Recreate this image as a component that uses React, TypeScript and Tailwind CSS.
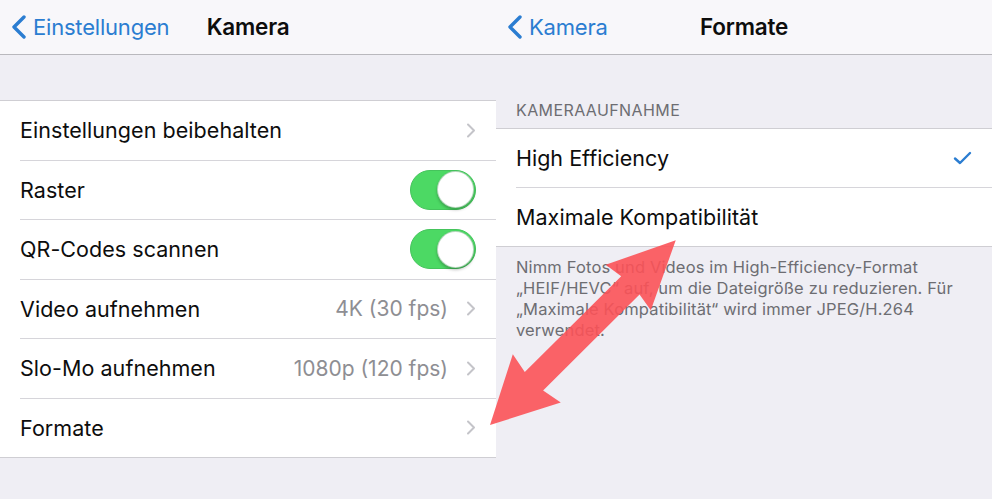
import React from 'react';

const font = "font-['Inter','Liberation_Sans',sans-serif]";

function BackChevron() {
  return (
    <svg width="16" height="24" viewBox="0 0 16 24" fill="none" className="shrink-0">
      <path d="M13 2L3 12L13 22" stroke="#2b7dd1" strokeWidth="3.4" strokeLinecap="round" strokeLinejoin="round" />
    </svg>
  );
}

function Chevron() {
  return (
    <svg width="10" height="15" viewBox="0 0 10 15" fill="none" className="shrink-0">
      <path d="M2 1.5L8 7.5L2 13.5" stroke="#c4c4c9" strokeWidth="2" strokeLinecap="round" strokeLinejoin="round" />
    </svg>
  );
}

function NavBar({ back, title }: { back: string; title: string }) {
  return (
    <div className="h-[55px] shrink-0 bg-[#f8f7fa] border-b border-[#b9b8bd] grid grid-cols-[1fr_auto_1fr] items-center">
      <div className="flex items-center gap-[6px] pl-[11px] text-[22px] text-[#2b7dd1] tracking-[-0.2px]">
        <BackChevron />
        <span>{back}</span>
      </div>
      <div className="text-[22.5px] font-semibold text-[#0d0d0d] tracking-[-0.2px]">{title}</div>
      <div />
    </div>
  );
}

function Toggle() {
  return (
    <div className="w-[66px] h-[40px] rounded-full bg-[#4cd964] flex items-center justify-end p-[1px] border border-[#45c45c]">
      <div className="w-[37px] h-[37px] rounded-full bg-white border border-[#4a9e5c]/40 shadow-[0_2px_3px_rgba(0,0,0,0.25)]" />
    </div>
  );
}

type Row = { label: string; value?: string; toggle?: boolean; chevron?: boolean };

const cameraRows: Row[] = [
  { label: 'Einstellungen beibehalten', chevron: true },
  { label: 'Raster', toggle: true },
  { label: 'QR-Codes scannen', toggle: true },
  { label: 'Video aufnehmen', value: '4K (30 fps)', chevron: true },
  { label: 'Slo-Mo aufnehmen', value: '1080p (120 fps)', chevron: true },
  { label: 'Formate', chevron: true },
];

function CameraPanel() {
  return (
    <div className="w-[496px] shrink-0 flex flex-col">
      <NavBar back="Einstellungen" title="Kamera" />
      <div className="mt-[45px] bg-white border-y border-[#cfced3]">
        {cameraRows.map((r, i) => (
          <div key={r.label} className="pl-5 h-[59.5px] last:h-[58.5px]">
            <div
              className={
                'h-full flex items-center pr-[20px] ' +
                (i < cameraRows.length - 1 ? 'border-b border-[#d6d5da]' : '')
              }
            >
              <span className="flex-1 text-[21.5px] text-[#0d0d0d] tracking-[0.05px]">{r.label}</span>
              {r.value && <span className="text-[21px] text-[#8e8e93] mr-[18px]">{r.value}</span>}
              {r.chevron && <Chevron />}
              {r.toggle && <Toggle />}
            </div>
          </div>
        ))}
      </div>
    </div>
  );
}

function FormatPanel() {
  return (
    <div className="w-[496px] shrink-0 flex flex-col">
      <NavBar back="Kamera" title="Formate" />
      <div className="h-[73px] flex items-end pb-[8px] px-5 text-[16px] leading-[20px] text-[#6d6d72] tracking-[0.4px]">
        KAMERAAUFNAHME
      </div>
      <div className="bg-white border-y border-[#cfced3]">
        <div className="pl-5 h-[59px]">
          <div className="h-full flex items-center pr-[20px] border-b border-[#d6d5da]">
            <span className="flex-1 text-[21.5px] text-[#0d0d0d]">High Efficiency</span>
            <svg width="19" height="14" viewBox="0 0 19 14" fill="none">
              <path d="M2 7.5L7 12L17 2" stroke="#2b7dd1" strokeWidth="2.4" strokeLinecap="round" strokeLinejoin="round" />
            </svg>
          </div>
        </div>
        <div className="pl-5 h-[58px] flex items-center">
          <span className="text-[21.5px] text-[#0d0d0d] tracking-[0.05px]">Maximale Kompatibilität</span>
        </div>
      </div>
      <p className="pt-[10px] px-5 text-[16.5px] leading-[21px] text-[#6d6d72] tracking-[0.15px] whitespace-nowrap">
        Nimm Fotos und Videos im High-Efficiency-Format
        <br />
        „HEIF/HEVC“ auf, um die Dateigröße zu reduzieren. Für
        <br />
        „Maximale Kompatibilität“ wird immer JPEG/H.264
        <br />
        verwendet.
      </p>
    </div>
  );
}

export default function App() {
  return (
    <div className={'relative w-[992px] h-[499px] overflow-hidden bg-[#efeef4] flex ' + font}>
      <CameraPanel />
      <FormatPanel />
      {/* red double arrow drawn over both screens */}
      <svg width="992" height="499" viewBox="0 0 992 499" className="absolute inset-0 pointer-events-none">
        <polygon
          transform="translate(490 425) rotate(-44.85)"
          points="0,0 66,-34 62,-13 198,-13 195,-32 262,0 195,32 198,13 62,13 66,34"
          fill="#fb5258"
          fillOpacity="0.9"
        />
      </svg>
    </div>
  );
}
